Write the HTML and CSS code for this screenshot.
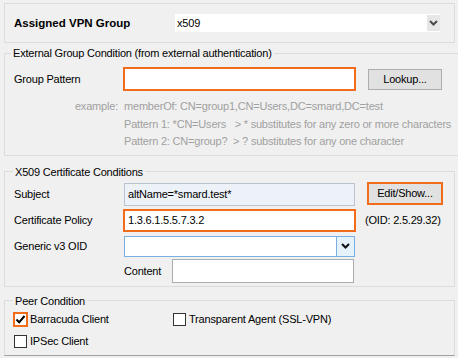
FILE: index.html
```html
<!DOCTYPE html>
<html lang="en">
<head>
    <meta charset="UTF-8">
    <title>Group Policy Condition</title>
    <link rel="stylesheet" href="styles.css">
</head>
<body>
    <div class="dialog">
        <div class="panel-top">
            <span class="label-bold">Assigned VPN Group</span>
            <div class="combo combo-flat">
                <span class="combo-text">x509</span>
                <span class="combo-arrow">
                    <svg width="9" height="6" viewBox="0 0 9 6"><path d="M1 1 L4.5 4.5 L8 1" fill="none" stroke="#4a4a4a" stroke-width="2"/></svg>
                </span>
            </div>
        </div>

        <fieldset class="group group-ext">
            <legend>External Group Condition (from external authentication)</legend>
            <div class="row row-pattern">
                <label class="row-label">Group Pattern</label>
                <div class="field highlight"></div>
                <button class="btn">Lookup...</button>
            </div>
            <div class="examples">
                <span class="ex-key">example:</span>
                <span>memberOf: CN=group1,CN=Users,DC=smard,DC=test</span>
                <span></span>
                <span>Pattern 1: *CN=Users &nbsp; &gt; * substitutes for any zero or more characters</span>
                <span></span>
                <span>Pattern 2: CN=group? &nbsp;&gt; ? substitutes for any one character</span>
            </div>
        </fieldset>

        <fieldset class="group group-cert">
            <legend>X509 Certificate Conditions</legend>
            <div class="row row-subject">
                <label class="row-label">Subject</label>
                <div class="field field-readonly">altName=*smard.test*</div>
                <button class="btn highlight">Edit/Show...</button>
            </div>
            <div class="row row-policy">
                <label class="row-label">Certificate Policy</label>
                <div class="field highlight">1.3.6.1.5.5.7.3.2</div>
                <span class="oid-note">(OID: 2.5.29.32)</span>
            </div>
            <div class="row row-oid">
                <label class="row-label">Generic v3 OID</label>
                <div class="combo combo-active">
                    <span class="combo-text"></span>
                    <span class="combo-arrow">
                        <svg width="9" height="6" viewBox="0 0 9 6"><path d="M1 1 L4.5 4.5 L8 1" fill="none" stroke="#111" stroke-width="2"/></svg>
                    </span>
                </div>
            </div>
            <div class="row row-content">
                <span class="row-label"></span>
                <div class="content-wrap">
                    <label class="content-label">Content</label>
                    <div class="field field-content"></div>
                </div>
            </div>
        </fieldset>

        <fieldset class="group group-peer">
            <legend>Peer Condition</legend>
            <div class="check-row">
                <label class="check check-wide"><span class="box highlight checked">
                    <svg width="11" height="11" viewBox="0 0 11 11"><path d="M1.5 5.5 L4.2 8.3 L9.5 2" fill="none" stroke="#000" stroke-width="2"/></svg>
                </span>Barracuda Client</label>
                <label class="check"><span class="box"></span>Transparent Agent (SSL-VPN)</label>
            </div>
            <div class="check-row">
                <label class="check"><span class="box"></span>IPSec Client</label>
            </div>
        </fieldset>
    </div>
</body>
</html>
```

FILE: styles.css
```css
body {
    margin: 0;
    background-color: #f0f0f0;
    font-family: "Liberation Sans", Arial, sans-serif;
    font-size: 11px;
    letter-spacing: -0.2px;
    color: #000;
}
.dialog {
    padding: 3px 3px 0 4px;
}
.panel-top {
    border: 1px solid #dcdcdc;
    height: 38px;
    display: flex;
    align-items: center;
    padding-left: 9px;
}
.label-bold {
    width: 161px;
    font-weight: bold;
    font-size: 11.5px;
    letter-spacing: 0;
}
.combo {
    display: flex;
    background: #fff;
    box-sizing: border-box;
}
.combo-text {
    flex: 1;
    padding-left: 2px;
    line-height: 18px;
}
.combo-arrow {
    display: flex;
    align-items: center;
    justify-content: center;
}
.combo-flat {
    width: 265px;
    height: 18px;
}
.combo-flat .combo-arrow {
    width: 13px;
    margin: 1px 0;
    background: #e6e6e6;
}

/* group boxes */
.group {
    margin: 2px 0 0;
    border: 1px solid #dcdcdc;
    padding: 6px 8px 4px 8px;
}
.group legend {
    padding: 0 2px;
    line-height: 16px;
    margin-left: -2px;
}
.group-cert legend, .group-peer legend {
    margin-left: 0;
}
.group-cert {
    margin-top: 8px;
    padding-top: 3px;
    padding-bottom: 3px;
}
.group-peer {
    margin-top: 6px;
    padding-top: 4px;
    padding-bottom: 7px;
    border-bottom-color: #a0a0a0;
}

.row {
    display: grid;
    grid-template-columns: 111px 231px auto;
    align-items: center;
}
.row-label {
    padding-left: 1px;
}
.row .btn {
    margin-left: 13px;
}
.field {
    background: #fff;
    border: 1px solid #abadb3;
    box-sizing: border-box;
    height: 22px;
    line-height: 20px;
    padding-left: 3px;
}
.highlight {
    border: 1px solid #f36c1c !important;
    outline: 1px solid #f36c1c;
}
.btn {
    width: 74px;
    height: 21px;
    background: #e1e1e1;
    border: 1px solid #adadad;
    font-family: inherit;
    font-size: 11px;
    letter-spacing: -0.2px;
    padding: 0;
    color: #000;
}
.row-pattern .field {
    height: 22px;
    margin: 1px 0;
}
.examples {
    display: grid;
    grid-template-columns: 105px auto;
    column-gap: 6px;
    margin-top: 7px;
    line-height: 17.5px;
    color: #a0a0a0;
    white-space: nowrap;
}
.ex-key {
    text-align: right;
}

.row-subject {
    height: 23px;
    margin-bottom: 4px;
}
.row-subject .field {
    height: 23px;
}
.row-subject .btn {
    align-self: start;
}
.field-readonly {
    background: #edf2f9;
    border-color: #b9c4d2;
}
.row-policy {
    margin-bottom: 5px;
}
.row-policy .field {
    height: 21px;
    line-height: 19px;
}
.oid-note {
    margin-left: 10px;
}
.combo-active {
    height: 21px;
    border: 1px solid #7aafe3;
}
.combo-active .combo-arrow {
    width: 17px;
    border-left: 1px solid #7aafe3;
    background: #e5f1fb;
}
.row-oid {
    margin-bottom: 2px;
}
.content-wrap {
    display: flex;
    align-items: center;
}
.content-label {
    width: 48px;
}
.field-content {
    width: 182px;
    height: 24px;
}

/* peer condition */
.check-row {
    display: flex;
    height: 13px;
    align-items: center;
    margin-bottom: 9px;
}
.check-row:last-child {
    margin-bottom: 0;
}
.check {
    display: flex;
    align-items: center;
    padding-left: 1px;
}
.check-wide {
    width: 158px;
}
.box {
    width: 13px;
    height: 13px;
    box-sizing: border-box;
    border: 1px solid #333;
    background: #fff;
    margin-right: 3px;
    display: flex;
    align-items: center;
    justify-content: center;
}
```
